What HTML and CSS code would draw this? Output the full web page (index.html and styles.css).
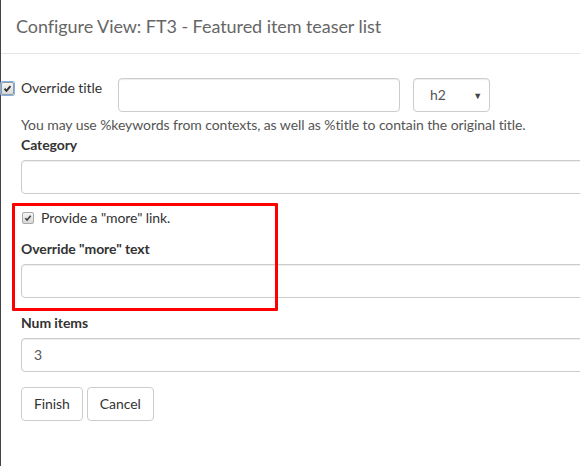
FILE: index.html
```html
<!DOCTYPE html>
<html>
<head>
<meta charset="utf-8">
<link rel="stylesheet" href="styles.css">
</head>
<body>
<div class="modal">
  <div class="modal-header">
    <h4 class="modal-title">Configure View: FT3 - Featured item teaser list</h4>
  </div>
  <div class="modal-body">
    <div class="title-row">
      <span class="check focused"><svg viewBox="0 0 13 13" width="13" height="13"><path d="M3 6.8 L5.3 9.2 L10 3.6" fill="none" stroke="#333" stroke-width="2.2"/></svg></span>
      <span class="title-label">Override title</span>
      <div class="form-control title-input"></div>
      <div class="form-control select">h2<span class="caret">▼</span></div>
    </div>
    <p class="help-block">You may use %keywords from contexts, as well as %title to contain the original title.</p>
    <label class="field-label">Category</label>
    <div class="form-control"></div>

    <div class="checkbox-row">
      <span class="check"><svg viewBox="0 0 13 13" width="12" height="12"><path d="M3 6.8 L5.3 9.2 L10 3.6" fill="none" stroke="#444" stroke-width="2.2"/></svg></span>
      <span class="check-label">Provide a "more" link.</span>
    </div>
    <label class="field-label more-label">Override "more" text</label>
    <div class="form-control"></div>

    <label class="field-label num-label">Num items</label>
    <div class="form-control value">3</div>

    <div class="buttons">
      <button class="btn">Finish</button>
      <button class="btn">Cancel</button>
    </div>

    <div class="highlight"></div>
  </div>
</div>
</body>
</html>
```

FILE: styles.css
```css
html, body {
  margin: 0;
  padding: 0;
  background: #fff;
  overflow: hidden;
  width: 580px;
  height: 466px;
}

body {
  font-family: Lato, "Open Sans", sans-serif;
  font-size: 14px;
  line-height: 20px;
  color: #333;
  letter-spacing: -0.08px;
}

.modal {
  width: 640px;
  height: 466px;
  border-left: 1px solid #444;
  box-sizing: border-box;
}

.modal-header {
  padding: 15px 15px 15px 15px;
  border-bottom: 1px solid #e5e5e5;
}

.modal-title {
  margin: 0;
  font-size: 18px;
  font-weight: 400;
  line-height: 23px;
  color: #666;
  letter-spacing: -0.06px;
}

.modal-body {
  position: relative;
  padding: 24px 20px 0 20px;
}

.form-control {
  box-sizing: border-box;
  height: 34px;
  border: 1px solid #ccc;
  border-radius: 4px;
  box-shadow: inset 0 1px 1px rgba(0,0,0,.075);
  background: #fff;
  color: #555;
  padding: 6px 12px;
  line-height: 20px;
}

.title-row {
  display: flex;
  align-items: flex-start;
}

.check {
  box-sizing: border-box;
  width: 13px;
  height: 13px;
  border: 1px solid #9a9a9a;
  border-radius: 2px;
  background: linear-gradient(#f4f4f4, #d8d8d8);
  display: flex;
  align-items: center;
  justify-content: center;
  flex: none;
}

.check svg { display: block; }

.check.focused {
  margin-left: -20px;
  margin-top: 4px;
  margin-right: 7px;
  box-shadow: 0 0 0 1px #7faee8;
}

.title-label {
  width: 97px;
  flex: none;
}

.title-input {
  width: 282px;
  flex: none;
}

.select {
  width: 77px;
  margin-left: 13px;
  padding-left: 16px;
  position: relative;
  flex: none;
}

.caret {
  position: absolute;
  right: 7px;
  top: 7px;
  font-size: 9px;
  color: #444;
}

.help-block {
  margin: 3px 0 0 0;
  color: #555;
}

.field-label {
  display: block;
  font-weight: 700;
  margin-bottom: 5px;
}

.checkbox-row {
  display: flex;
  align-items: center;
  margin-top: 14px;
  height: 20px;
}

.checkbox-row .check {
  width: 12px;
  height: 12px;
  margin-left: 1px;
  margin-right: 7px;
  border-color: #aaa;
}

.more-label {
  margin-top: 11px;
}

.num-label {
  margin-top: 15px;
}

.buttons {
  margin-top: 15px;
  display: flex;
  gap: 4px;
}

.btn {
  font-family: Lato, "Open Sans", sans-serif;
  font-size: 14px;
  line-height: 20px;
  letter-spacing: -0.08px;
  color: #333;
  background: #fff;
  border: 1px solid #ccc;
  border-radius: 4px;
  padding: 6px 12px;
  height: 34px;
}

.highlight {
  position: absolute;
  left: 11px;
  top: 149px;
  width: 266px;
  height: 108px;
  box-sizing: border-box;
  border: 3px solid #f00;
  border-radius: 1px;
}
```
